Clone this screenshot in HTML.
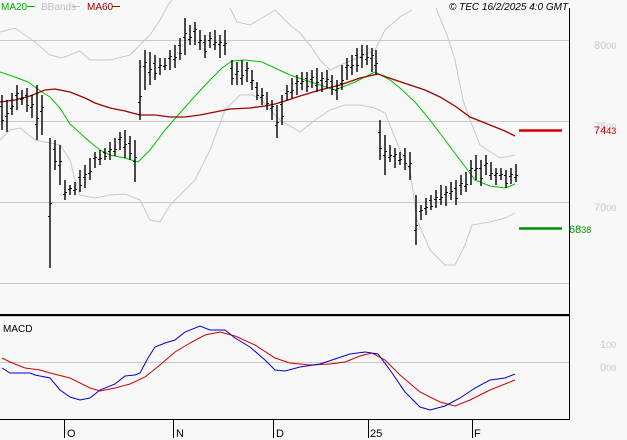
<!DOCTYPE html>
<html><head><meta charset="utf-8"><style>
html,body{margin:0;padding:0;background:#f8f8f8;}
svg{display:block;font-family:"Liberation Sans",sans-serif;}
</style></head><body>
<svg id="s" width="627" height="440" viewBox="0 0 627 440" xmlns="http://www.w3.org/2000/svg">
<rect width="627" height="440" fill="#f8f8f8"/>
<g stroke="#c8c8c8" stroke-width="1">
<line x1="0" y1="40.5" x2="569" y2="40.5"/>
<line x1="0" y1="121.5" x2="569" y2="121.5"/>
<line x1="0" y1="202.5" x2="569" y2="202.5"/>
<line x1="0" y1="283.5" x2="569" y2="283.5"/>
<line x1="0" y1="362.5" x2="569" y2="362.5"/>
</g>
<g fill="none" stroke="#c8c8c8" stroke-width="1">
<polyline points="0,32 15,28 35,42 50,55 62,58 70,55 80,51 90,60 110,60 130,55 140,45 150,35 160,20 168,5 172,0"/>
<polyline points="230,8 237,22 250,25 262,18 275,10 290,25 300,33 310,45 320,60 330,70 345,63 360,57 375,50 385,30 400,17 412,10"/>
<polyline points="436,8 447,35 455,60 463,100 470,120 480,145 500,158 515,155"/>
<polyline points="0,140 10,130 20,128 35,140 60,145 70,160 75,180 80,195 95,198 110,195 125,194 140,200 150,220 160,222 170,205 180,195 195,180 210,150 225,110 240,95 252,95 260,98 270,110 280,120 300,132 315,120 330,110 345,105 360,105 375,108 385,113 400,150 410,170 417,220 430,250 445,265 455,265 465,245 472,225 490,222 505,218 515,213"/>
</g>
<polyline fill="none" stroke="#00c000" stroke-width="1" points="0,72 12,76 28,82 42,92 50,97 60,108 70,124 80,133 90,142 100,150 110,155 125,158 138,162 150,150 165,130 180,113 195,96 210,80 222,68 232,61 245,60 262,62 275,68 290,75 305,80 320,85 335,90 355,82 375,72 390,80 400,88 415,102 430,120 445,140 460,160 475,180 490,186 505,188 515,184"/>
<polyline fill="none" stroke="#a00000" stroke-width="1.3" points="0,102 15,100 30,96 45,90 55,89 70,92 85,98 95,103 110,108 125,111 140,115 155,115 170,117 185,117 200,115 215,112 230,109 250,108 265,106 275,104 285,101 300,96 320,90 340,85 360,78 378,74 395,80 410,85 425,90 440,97 455,106 470,117 490,125 505,131 515,136"/>
<g id="bars" stroke="#000" stroke-width="1.4"></g>
<line x1="519" y1="130.5" x2="562" y2="130.5" stroke="#d00000" stroke-width="2.5"/>
<line x1="519" y1="228.5" x2="562" y2="228.5" stroke="#009000" stroke-width="2.5"/>
<rect x="0" y="314" width="570" height="2.2" fill="#000"/>
<line x1="569.5" y1="8" x2="569.5" y2="420" stroke="#000" stroke-width="1"/>
<line x1="0" y1="419.5" x2="570" y2="419.5" stroke="#000" stroke-width="1"/>
<g stroke="#000" stroke-width="1">
<line x1="64.5" y1="419" x2="64.5" y2="438"/>
<line x1="173.5" y1="419" x2="173.5" y2="438"/>
<line x1="273.5" y1="419" x2="273.5" y2="438"/>
<line x1="368.5" y1="419" x2="368.5" y2="438"/>
<line x1="472.5" y1="419" x2="472.5" y2="438"/>
</g>
<g font-size="11" fill="#000">
<text x="67" y="437">O</text><text x="176" y="437">N</text><text x="276" y="437">D</text><text x="370" y="437">25</text><text x="474" y="437">F</text>
</g>
<polyline fill="none" stroke="#d00000" stroke-width="1" points="2,358 10,362 25,368 40,370 50,373 70,378 90,388 100,391 115,388 130,384 145,377 160,365 175,352 190,343 205,335 220,332 235,336 255,345 275,358 290,363 310,365 330,364 345,362 360,356 372,353 385,360 400,375 420,392 440,402 455,406 470,400 490,390 515,380"/>
<polyline fill="none" stroke="#0000d0" stroke-width="1" points="2,368 10,373 30,373 35,375 40,376 50,378 60,390 70,397 80,400 90,398 100,390 115,384 125,376 135,375 140,373 148,358 155,347 165,343 175,340 185,332 200,326 210,330 225,330 235,338 250,347 265,360 275,370 285,371 300,367 320,364 335,359 350,354 365,352 378,354 390,370 405,392 420,407 430,410 445,406 460,398 475,388 490,380 505,378 515,374"/>
<text x="3" y="332" font-size="10" fill="#000">MACD</text>
<g font-size="10">
<text x="1" y="10" fill="#00b000">MA20</text><line x1="27" y1="6.5" x2="35" y2="6.5" stroke="#00b000"/>
<text x="41" y="10" fill="#c0c0c0">BBands</text><line x1="72" y1="6.5" x2="80" y2="6.5" stroke="#c0c0c0"/>
<text x="87" y="10" fill="#a00000">MA60</text><line x1="112" y1="6.5" x2="120" y2="6.5" stroke="#a00000"/>
<text x="449" y="10" fill="#000" font-style="italic">© TEC 16/2/2025 4:0 GMT</text>
</g>
<g font-size="11" fill="#c8c8c8">
<text x="594" y="49">80<tspan font-size="9">00</tspan></text>
<text x="594" y="130">75<tspan font-size="9">00</tspan></text>
<text x="594" y="211">70<tspan font-size="9">00</tspan></text>
<text x="600" y="348">1<tspan font-size="9">00</tspan></text>
<text x="600" y="371">0<tspan font-size="9">00</tspan></text>
</g>
<text x="594" y="134" font-size="11" fill="#c00000">74<tspan font-size="9">43</tspan></text>
<text x="569" y="233" font-size="11" fill="#009000">68<tspan font-size="9">38</tspan></text>
</svg>
<script>
var pts=[[2,95,130],[7,100,132],[12,93,115],[17,85,110],[22,90,105],[27,88,112],[32,95,118],[37,85,140],[42,95,135],[50,138,268],[55,140,170],[60,145,185],[65,180,200],[70,185,195],[75,182,195],[80,170,192],[85,165,188],[90,158,180],[95,152,168],[100,150,165],[105,148,160],[110,142,160],[115,138,156],[120,132,150],[125,130,158],[130,136,160],[135,140,182],[140,60,120],[145,50,90],[150,52,85],[155,55,80],[160,58,75],[165,58,70],[170,50,70],[175,45,68],[180,38,60],[185,18,55],[190,25,45],[195,22,45],[200,30,50],[205,35,58],[210,32,48],[215,30,50],[220,35,58],[225,30,55],[232,60,85],[237,62,85],[242,60,85],[247,62,82],[252,70,90],[257,82,100],[262,88,105],[267,92,110],[272,100,120],[277,105,138],[282,95,125],[287,85,100],[292,78,98],[297,75,95],[302,72,90],[307,72,92],[312,70,88],[317,68,92],[322,72,92],[327,70,88],[332,75,95],[337,80,100],[342,65,90],[347,58,80],[352,55,75],[357,48,72],[362,45,68],[367,45,65],[372,48,72],[376,50,75],[380,120,160],[385,135,175],[390,145,162],[395,148,168],[400,152,165],[405,148,170],[410,152,180],[416,195,245],[421,205,220],[426,198,215],[431,195,210],[436,190,208],[441,185,205],[446,186,206],[451,182,200],[456,180,205],[461,175,195],[466,172,192],[471,160,185],[476,155,180],[481,160,186],[486,155,175],[491,162,180],[496,168,185],[501,168,180],[506,170,188],[511,168,184],[516,164,182]];
var g=document.getElementById('bars'),h='';
pts.forEach(function(p,i){var o=Math.round(p[1]+(p[2]-p[1])*(0.3+0.4*((i*7)%5)/4)),c=Math.round(p[1]+(p[2]-p[1])*(0.7-0.4*((i*3)%5)/4));h+='<line x1="'+p[0]+'" y1="'+p[1]+'" x2="'+p[0]+'" y2="'+p[2]+'"/><line stroke-width="1" x1="'+(p[0]-2)+'" y1="'+(o+.5)+'" x2="'+p[0]+'" y2="'+(o+.5)+'"/><line stroke-width="1" x1="'+p[0]+'" y1="'+(c+.5)+'" x2="'+(p[0]+2)+'" y2="'+(c+.5)+'"/>';});
g.innerHTML=h;
</script>
</body></html>
